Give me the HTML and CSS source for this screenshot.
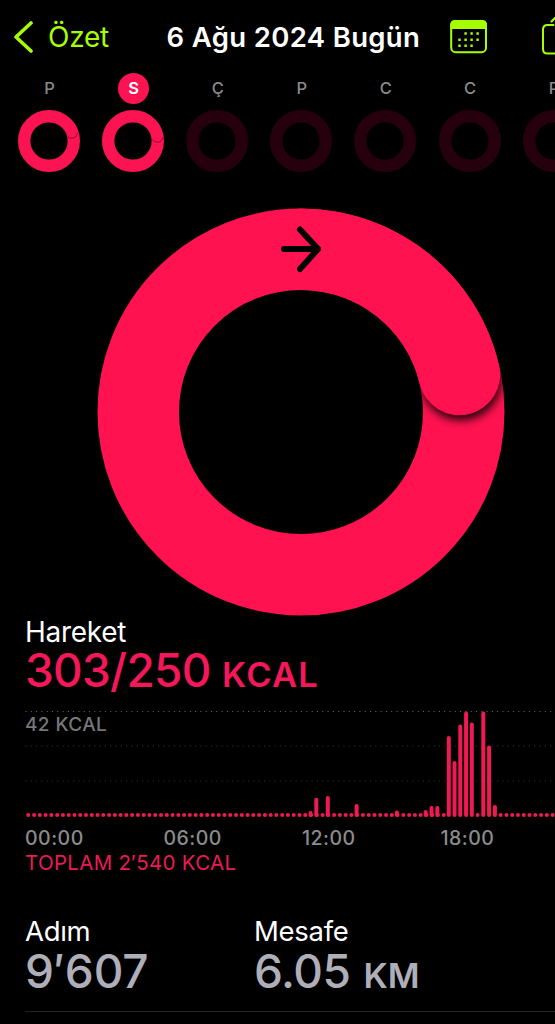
FILE: index.html
```html
<!DOCTYPE html>
<html lang="tr">
<head>
<meta charset="utf-8">
<title>Özet</title>
<link rel="stylesheet" href="styles.css">
</head>
<body>
<main class="screen">
  <header class="bar">
    <a class="back">
      <svg width="21" height="34" viewBox="0 0 21 34"><path d="M19 3 4 17l15 14" class="line thick"/></svg>
      <span class="back-label">Özet</span>
    </a>
    <h1 class="title">6 Ağu 2024 Bugün</h1>
    <svg class="calendar" width="38" height="36" viewBox="0 0 38 36">
      <rect x="1.200" y="2" width="34.800" height="31.200" rx="4.500" class="line"/>
      <path d="M.2 10V6Q.2 1 5.200 1h26.800Q37 1 37 6V10z" fill="#a6ff00"/>
      <path class="days-grid" d="M14.400 14.500h2.400M20.400 14.500h2.400M26.400 14.500h2.400M8.300 20.700h2.400M14.400 20.700h2.400M20.400 20.700h2.400M26.400 20.700h2.400M8.300 26.700h2.400M14.400 26.700h2.400M20.400 26.700h2.400"/>
    </svg>
    <svg class="share" width="36" height="46" viewBox="0 0 36 46">
      <path class="line" d="M12.500 13H6.500Q2 13 2 17.500V37Q2 41.500 6.500 41.500H29.500Q34 41.500 34 37V17.500Q34 13 29.500 13H23.500M18 29V2M10.500 9.500 18 2l7.500 7.500"/>
    </svg>
  </header>

  <nav class="week">
    <div class="day"><span class="letter">P</span>
      <svg class="mini" viewBox="0 0 62 62"><circle class="full" cx="31" cy="31" r="24.800"/><path class="cap" d="M49 25.500Q51 29 54.500 28.300Q59 27.500 59.500 23"/></svg></div>
    <div class="day"><span class="letter active">S</span>
      <svg class="mini" viewBox="0 0 62 62"><circle class="full" cx="31" cy="31" r="24.800"/><path class="cap" d="M49.300 28.500Q51.500 32.500 55.500 32.200Q60 32 61 27"/></svg></div>
    <div class="day"><span class="letter">Ç</span><svg class="mini" viewBox="0 0 62 62"><circle class="empty" cx="31" cy="31" r="24.800"/></svg></div>
    <div class="day"><span class="letter">P</span><svg class="mini" viewBox="0 0 62 62"><circle class="empty" cx="31" cy="31" r="24.800"/></svg></div>
    <div class="day"><span class="letter">C</span><svg class="mini" viewBox="0 0 62 62"><circle class="empty" cx="31" cy="31" r="24.800"/></svg></div>
    <div class="day"><span class="letter">C</span><svg class="mini" viewBox="0 0 62 62"><circle class="empty" cx="31" cy="31" r="24.800"/></svg></div>
    <div class="day"><span class="letter">P</span><svg class="mini" viewBox="0 0 62 62"><circle class="empty" cx="31" cy="31" r="24.800"/></svg></div>
  </nav>

  <svg class="ring" width="408" height="408" viewBox="0 0 408 408">
    <defs>
      <filter id="soft" x="-50%" y="-50%" width="200%" height="200%"><feGaussianBlur stdDeviation="5"/></filter>
      <clipPath id="band"><path clip-rule="evenodd" d="M204 .5a203.500 203.500 0 1 1 0 407a203.500 203.500 0 1 1 0-407zM204 82a122 122 0 1 0 0 244a122 122 0 1 0 0-244z"/></clipPath>
    </defs>
    <circle cx="204" cy="204" r="162.750" class="track"/>
    <g clip-path="url(#band)"><circle cx="364" cy="171.500" r="40.500" filter="url(#soft)" fill="#000" opacity=".9"/></g>
    <path class="progress" d="M204 41.250A162.750 162.750 0 0 1 362.400 166.500"/>
    <path class="arrow" d="M187 41h34M203 21.500 221 41 203 61"/>
  </svg>

  <section class="move">
    <h2 class="name">Hareket</h2>
    <p class="value pink"><span class="num-move">303/250</span><span class="unit unit-kcal">KCAL</span></p>
    <div class="chart">
      <svg class="plot" width="530" height="110" viewBox="25 709 530 110">
        <path class="grid top" d="M25.500 711.500H555"/>
        <path class="grid" d="M25.500 746H555M25.500 781H555"/>
        <path class="dots" d="M28.300 815H446M477.580 815H478M500.660 815H555"/>
        <path class="bars" d="M310.500 815v-2M316.300 815v-15.300M327.800 815v-17M356.600 815v-9M396.900 815v-2.500M425.700 815v-3M431.500 815v-7M437.300 815v-7M448.800 815V738M454.500 815V763M460.300 815V726.500M466.100 815V713.500M471.800 815V724.500M483.300 815V713.500M489.100 815V747.500M494.900 815v-8"/>
      </svg>
      <span class="peak">42 KCAL</span>
    </div>
    <div class="hours"><span>00:00</span><span>06:00</span><span>12:00</span><span>18:00</span></div>
    <p class="total">TOPLAM 2′540 KCAL</p>
  </section>

  <section class="stats">
    <div><h2 class="name small">Adım</h2><p class="value gray"><span class="num-steps">9′607</span></p></div>
    <div><h2 class="name small">Mesafe</h2><p class="value gray"><span class="num-km">6.05</span><span class="unit unit-km">KM</span></p></div>
  </section>
</main>
</body>
</html>
```
FILE: styles.css
```css
* { box-sizing: border-box; margin: 0; padding: 0; }
body { background: #000; overflow: hidden; font-family: Inter, "Liberation Sans", sans-serif; }
.screen { width: 555px; height: 1024px; overflow: hidden; background: #000; color: #fff; display: flex; flex-direction: column; }
svg { display: block; flex: none; }
span, h1, h2 { white-space: nowrap; }

.bar { height: 74px; flex: none; display: flex; align-items: center; padding-left: 12px; }
.back { display: flex; align-items: center; width: 154.500px; flex: none; color: #a6ff00; }
.back-label { margin-left: 15px; font-size: 28px; letter-spacing: -.25px; }
.title { width: 283px; flex: none; font-size: 27.500px; font-weight: 580; letter-spacing: .35px; }
.line { fill: none; stroke: #a6ff00; stroke-width: 2; stroke-linecap: round; stroke-linejoin: round; }
.thick { stroke-width: 3.6; }
.calendar { margin-right: 53px; }
.days-grid { stroke: #a6ff00; stroke-width: 2.400; }
.share { margin-top: -5px; }

.week { height: 134px; flex: none; display: flex; padding-left: 7.500px; }
.day { width: 84.100px; flex: none; display: flex; flex-direction: column; align-items: center; }
.letter { width: 31px; height: 31px; margin-top: -1px; line-height: 31px; border-radius: 50%; text-align: center; font-size: 16.500px; font-weight: 500; color: #8b8b8b; }
.active { background: #fb1352; color: #fff; font-weight: 600; }
.mini { width: 62px; height: 62px; margin: 6px 0 0 -1px; }
.full, .empty { fill: none; stroke: #fb1352; stroke-width: 12.400; }
.empty { stroke: #26000c; }
.cap { fill: none; stroke: #9b0b34; stroke-width: 1; }

.ring { margin: -.5px 0 -1px 97.400px; }
.track, .progress { fill: none; stroke: #ff124f; stroke-width: 81.500; }
.progress { stroke-linecap: round; }
.arrow { fill: none; stroke: #000; stroke-width: 6; stroke-linecap: round; stroke-linejoin: round; }

.move { height: 300.500px; flex: none; padding-left: 25px; }
.name { height: 33px; line-height: 34px; font-size: 28px; font-weight: 400; letter-spacing: -.3px; }
.small { height: 34px; font-size: 27.500px; line-height: 33px; }
.value { height: 44px; line-height: 44px; display: flex; align-items: baseline; font-size: 46px; font-weight: 450; }
.pink { color: #f4175a; }
.gray { color: #aeafb8; }
.num-move { width: 197px; letter-spacing: -.750px; }
.num-km { width: 109.500px; letter-spacing: -.500px; }
.num-steps { letter-spacing: -.100px; }
.unit { font-size: 34.500px; font-weight: 600; }
.unit-kcal { letter-spacing: 1.200px; }
.chart { display: grid; margin-top: 17px; height: 110px; }
.plot, .peak { grid-area: 1 / 1; }
.peak { height: 31px; line-height: 31px; font-size: 19px; font-weight: 550; letter-spacing: .4px; color: #77777b; }
.grid { fill: none; stroke: #363636; stroke-width: 1; stroke-dasharray: 1 4.300; }
.top { stroke: #686868; }
.dots, .bars { fill: none; stroke: #ef1a54; stroke-width: 4; stroke-linecap: round; }
.dots { stroke-dasharray: 0 5.770; }
.hours { display: grid; grid-template-columns: repeat(4, 138.500px); height: 26px; margin-top: 6.500px; line-height: 26px; font-size: 19.500px; font-weight: 550; letter-spacing: .5px; color: #8c8c8c; }
.total { height: 24px; line-height: 24px; font-size: 20.500px; letter-spacing: .3px; color: #e91b57; }

.stats { flex: none; margin-left: 25px; height: 97px; border-bottom: 1px solid #242424; display: grid; grid-template-columns: 229px 1fr; }
```
